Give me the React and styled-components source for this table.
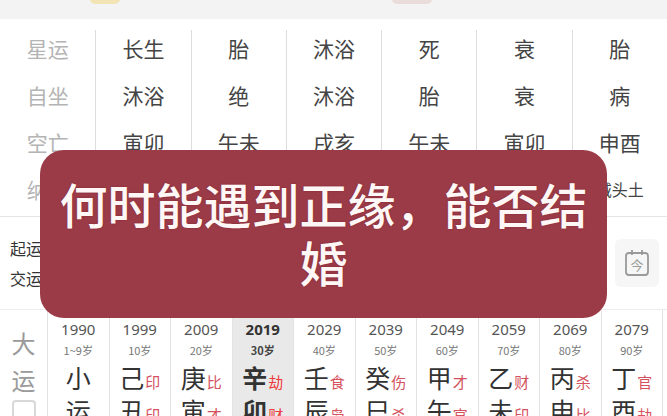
import React from 'react';
import styled, { createGlobalStyle } from 'styled-components';

const Global = createGlobalStyle`
  html, body {
    margin: 0;
    padding: 0;
    background: #ffffff;
  }
  body {
    width: 667px;
    height: 416px;
    overflow: hidden;
    font-family: "Noto Sans CJK SC", "Noto Sans", sans-serif;
  }
`;

const Page = styled.div`
  position: relative;
  width: 667px;
  height: 416px;
  overflow: hidden;
  background: #fff;
`;

const TopBar = styled.div`
  height: 19px;
  background: #f3f3f3;
  display: flex;
  align-items: flex-start;
  padding-left: 90px;
  gap: 272px;
  overflow: hidden;
`;

const TopIcon = styled.div`
  width: ${p => p.w}px;
  height: 10px;
  margin-top: -6px;
  border-radius: 5px;
  background: ${p => p.color};
  opacity: 0.45;
`;

const UpperTable = styled.div`
  display: grid;
  grid-template-columns: repeat(7, 1fr);
  padding-top: 3px;
  height: 194px;
  border-bottom: 1px solid #e6e6e6;
`;

const Col = styled.div`
  display: flex;
  flex-direction: column;
  align-items: center;
  border-left: ${p => (p.first ? 'none' : '1px solid #dddddd')};
  margin-top: 8px;
`;

const Cell = styled.div`
  height: 47px;
  display: flex;
  align-items: center;
  justify-content: center;
  font-size: ${p => (p.small ? 16 : 21)}px;
  color: ${p => (p.label ? '#b4b4b4' : '#444')};
  white-space: nowrap;
  &:first-child {
    margin-top: -6px;
  }
`;

const StartRow = styled.div`
  display: flex;
  align-items: center;
  justify-content: space-between;
  height: 92px;
  border-bottom: 1px solid #ececec;
`;

const StartLabels = styled.div`
  display: flex;
  flex-direction: column;
  gap: 6px;
  padding-left: 10px;
  font-size: 16px;
  color: #333;
  line-height: 24px;
`;

const TodayBtn = styled.div`
  width: 44px;
  height: 48px;
  margin-right: 8px;
  background: #f6f6f6;
  border-radius: 6px;
  display: flex;
  align-items: center;
  justify-content: center;
`;

const LuckGrid = styled.div`
  display: grid;
  grid-template-columns: 47px repeat(10, 61.5px) 1fr;
  height: 98px;
`;

const SideLabel = styled.div`
  display: flex;
  flex-direction: column;
  align-items: center;
  padding-top: 14px;
  font-size: 24px;
  line-height: 37px;
  color: #9a9a9a;
`;

const SmallBox = styled.div`
  width: 20px;
  height: 14px;
  margin-top: 2px;
  border: 2px solid #d8d8d8;
  border-bottom: none;
  border-radius: 4px 4px 0 0;
`;

const LuckCol = styled.div`
  display: flex;
  flex-direction: column;
  align-items: center;
  border-left: 1px solid #e2e2e2;
  background: ${p => (p.active ? '#e9e9e9' : 'transparent')};
  padding-top: 9px;
`;

const Year = styled.div`
  font-family: "Noto Sans", "DejaVu Sans", sans-serif;
  font-size: 15px;
  line-height: 20px;
  font-weight: ${p => (p.active ? 700 : 400)};
  color: ${p => (p.active ? '#333' : '#555')};
`;

const Age = styled.div`
  font-size: 11px;
  line-height: 16px;
  margin-top: 3px;
  font-weight: ${p => (p.active ? 700 : 400)};
  color: ${p => (p.active ? '#444' : '#777')};
`;

const Pillar = styled.div`
  display: flex;
  align-items: baseline;
  height: 32px;
  margin-top: 1px;
`;

const Gan = styled.span`
  font-size: 25px;
  color: #333;
  font-weight: ${p => (p.active ? 700 : 400)};
`;

const God = styled.span`
  font-size: 15px;
  color: ${p => (p.active ? '#ee3a3a' : '#d4525e')};
  margin-left: 1px;
`;

const Overlay = styled.div`
  position: absolute;
  left: 40px;
  top: 150px;
  width: 567px;
  height: 168px;
  border-radius: 24px;
  background: #9c3b48;
  box-sizing: border-box;
  padding-top: 24px;
  text-align: center;
  color: #fff6f6;
  font-size: 48px;
  font-weight: 500;
  line-height: 58px;
  text-shadow: 0 0 2px rgba(80, 0, 10, 0.4);
`;

const upper = [
  { label: true, items: ['星运', '自坐', '空亡', '纳音'] },
  { items: ['长生', '沐浴', '寅卯', ''] },
  { items: ['胎', '绝', '午未', ''] },
  { items: ['沐浴', '沐浴', '戌亥', ''] },
  { items: ['死', '胎', '午未', ''] },
  { items: ['衰', '衰', '寅卯', ''] },
  { items: ['胎', '病', '申酉', '城头土'] },
];

const luck = [
  { year: '1990', age: '1~9岁', gan: '小', gg: '', zhi: '运', zg: '' },
  { year: '1999', age: '10岁', gan: '己', gg: '印', zhi: '丑', zg: '印' },
  { year: '2009', age: '20岁', gan: '庚', gg: '比', zhi: '寅', zg: '才' },
  { year: '2019', age: '30岁', gan: '辛', gg: '劫', zhi: '卯', zg: '财', active: true },
  { year: '2029', age: '40岁', gan: '壬', gg: '食', zhi: '辰', zg: '枭' },
  { year: '2039', age: '50岁', gan: '癸', gg: '伤', zhi: '巳', zg: '杀' },
  { year: '2049', age: '60岁', gan: '甲', gg: '才', zhi: '午', zg: '官' },
  { year: '2059', age: '70岁', gan: '乙', gg: '财', zhi: '未', zg: '印' },
  { year: '2069', age: '80岁', gan: '丙', gg: '杀', zhi: '申', zg: '比' },
  { year: '2079', age: '90岁', gan: '丁', gg: '官', zhi: '酉', zg: '劫' },
];

function TodayIcon() {
  return (
    <svg width="28" height="30" viewBox="0 0 28 30" fill="none" stroke="#9a9a9a" strokeWidth="1.8">
      <rect x="3" y="5" width="22" height="22" rx="3" />
      <line x1="9" y1="2" x2="9" y2="7" />
      <line x1="19" y1="2" x2="19" y2="7" />
      <text x="14" y="22" textAnchor="middle" fontSize="13" fill="#9a9a9a" stroke="none"
        fontFamily="Noto Sans CJK SC, sans-serif">今</text>
    </svg>
  );
}

export default function App() {
  return (
    <Page>
      <Global />
      <TopBar>
        <TopIcon w={30} color="#f3d36a" />
        <TopIcon w={40} color="#e2c0c0" />
      </TopBar>

      <UpperTable>
        {upper.map((col, i) => (
          <Col key={i} first={i === 0}>
            {col.items.map((t, j) => (
              <Cell key={j} label={col.label} small={j === 3 && !col.label}>{t}</Cell>
            ))}
          </Col>
        ))}
      </UpperTable>

      <StartRow>
        <StartLabels>
          <div>起运</div>
          <div>交运</div>
        </StartLabels>
        <TodayBtn>
          <TodayIcon />
        </TodayBtn>
      </StartRow>

      <LuckGrid>
        <SideLabel>
          <div>大</div>
          <div>运</div>
          <SmallBox />
        </SideLabel>
        {luck.map(l => (
          <LuckCol key={l.year} active={l.active}>
            <Year active={l.active}>{l.year}</Year>
            <Age active={l.active}>{l.age}</Age>
            <Pillar>
              <Gan active={l.active}>{l.gan}</Gan>
              {l.gg && <God active={l.active}>{l.gg}</God>}
            </Pillar>
            <Pillar>
              <Gan active={l.active}>{l.zhi}</Gan>
              {l.zg && <God active={l.active}>{l.zg}</God>}
            </Pillar>
          </LuckCol>
        ))}
        <LuckCol />
      </LuckGrid>

      <Overlay>
        何时能遇到正缘，能否结<br />婚
      </Overlay>
    </Page>
  );
}
